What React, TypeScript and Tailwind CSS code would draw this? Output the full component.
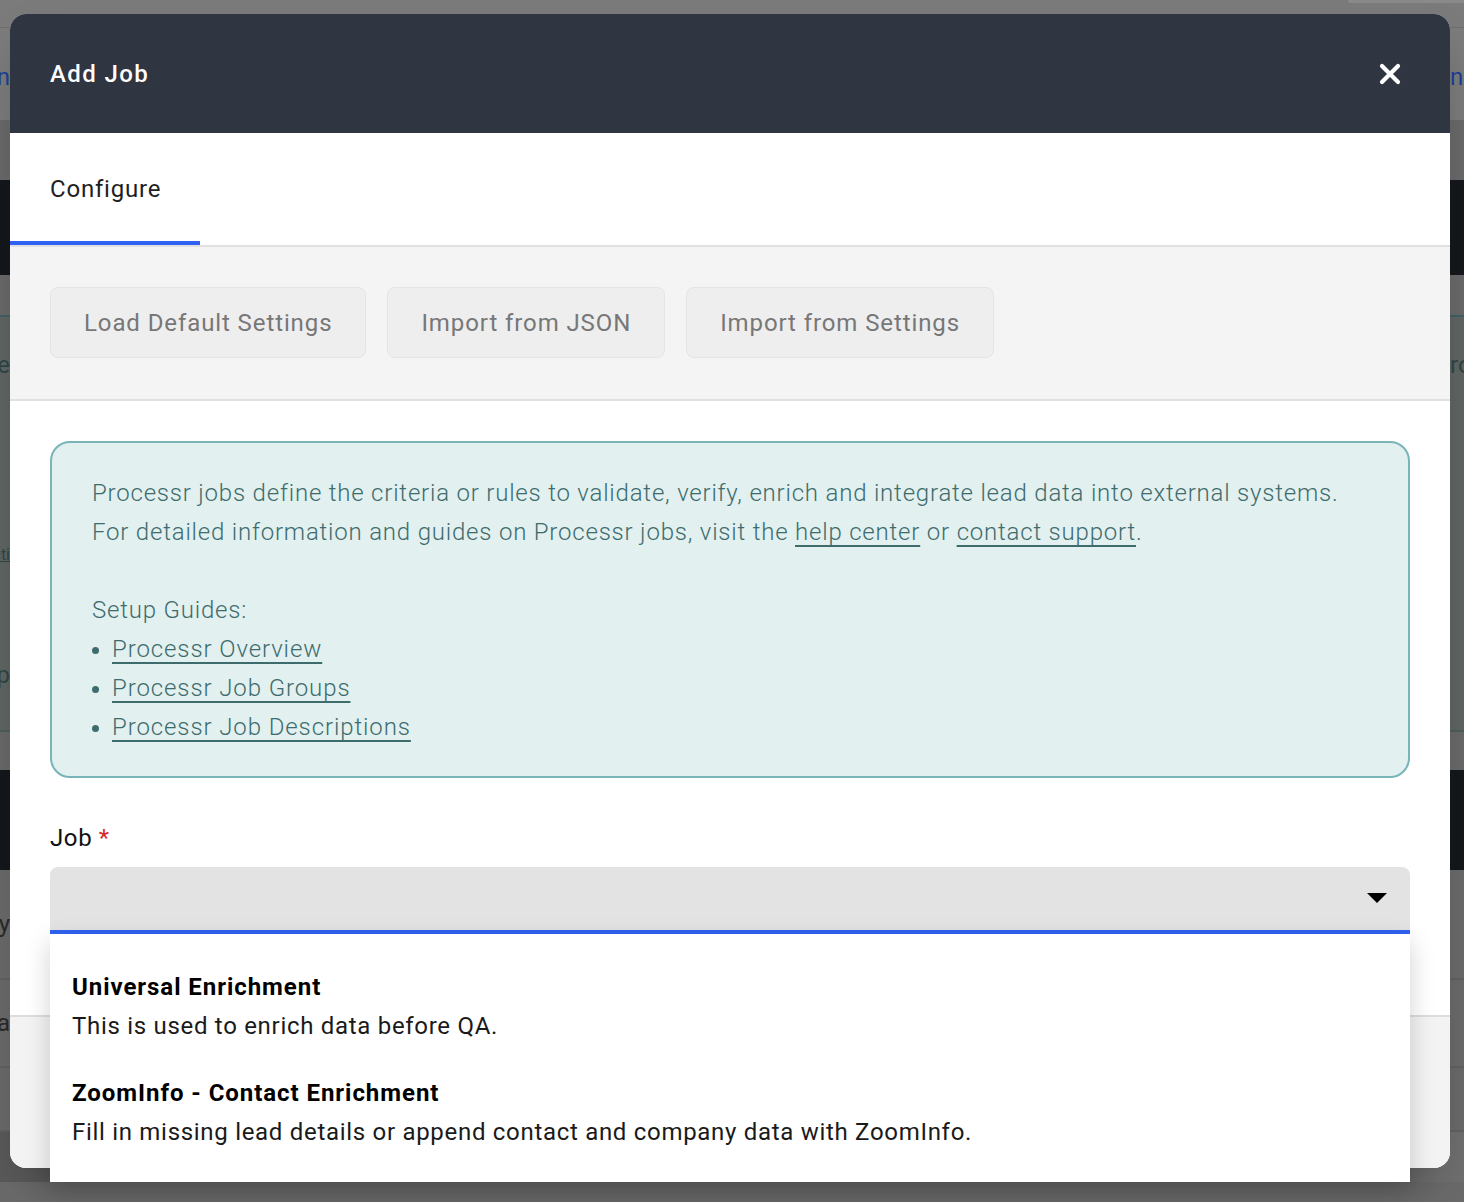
import React from "react";

const jobs = [
  { title: "Universal Enrichment", desc: "This is used to enrich data before QA." },
  {
    title: "ZoomInfo - Contact Enrichment",
    desc: "Fill in missing lead details or append contact and company data with ZoomInfo.",
  },
];

const guides = ["Processr Overview", "Processr Job Groups", "Processr Job Descriptions"];

function EdgeText({ left, right, className = "" }: { left?: string; right?: string; className?: string }) {
  // background page text peeking out on both sides of the modal
  return (
    <div className={`flex justify-between items-center text-[24px] ${className}`}>
      <div className="w-[10px] overflow-hidden flex justify-end">
        <span className="shrink-0 whitespace-nowrap">{left}</span>
      </div>
      <div className="w-[14px] overflow-hidden">
        <span className="whitespace-nowrap">{right}</span>
      </div>
    </div>
  );
}

export default function App() {
  return (
    <div className="relative w-[1464px] h-[1202px] overflow-hidden bg-[#6b6b6b] font-['Roboto','Liberation_Sans',sans-serif]">
      {/* Dimmed page behind the modal */}
      <div className="flex flex-col">
        <div className="h-[28px] bg-[#7b7b7b] border-b border-[#6f6f6f] flex justify-end">
          <div className="w-[116px] h-[3px] bg-[#8a8a8a] rounded-bl-[6px]"></div>
        </div>
        <div className="h-[92px] bg-[#7c7c7c] flex flex-col justify-center pt-[6px]">
          <EdgeText left="Admin" right="nm" className="text-[#2a2a2a] [&_span]:first:text-[#1c3f9a]" />
        </div>
        <div className="h-[60px] bg-[#6a6a6a]"></div>
        <div className="h-[95px] bg-[#14181c]"></div>
        <div className="h-[40px] bg-[#6a6a6a]"></div>
        <div className="h-[415px] bg-[#5f6664] border-t-2 border-[#3f6262] flex flex-col text-[#2f4545]">
          <EdgeText left="Type" right="ro" className="mt-[30px]" />
          <div className="mt-[160px] flex">
            <div className="w-[10px] overflow-hidden flex justify-end">
              <span className="shrink-0 underline">Acti</span>
            </div>
          </div>
          <EdgeText left="Setup" className="mt-[90px]" />
        </div>
        <div className="h-[40px] bg-[#6a6a6a] border-t-2 border-[#4b5e5e]"></div>
        <div className="h-[100px] bg-[#14181c]"></div>
        <div className="flex flex-col text-[#2a2a2a]">
          <div className="h-[110px] border-b-2 border-[#626262] flex items-center">
            <EdgeText left="Priority" className="w-full" />
          </div>
          <div className="h-[88px] border-b-2 border-[#626262] flex items-center">
            <EdgeText left="Data" className="w-full" />
          </div>
          <div className="h-[64px] border-b-2 border-[#626262]"></div>
          <div className="h-[50px] bg-gradient-to-r from-[#5a5a5a] to-[#707070]"></div>
        </div>
      </div>

      {/* Modal */}
      <div className="absolute left-[10px] top-[14px] w-[1440px] flex flex-col bg-white rounded-[16px] shadow-2xl">
        <div className="h-[119px] bg-[#2f3541] rounded-t-[16px] flex items-center justify-between px-[40px]">
          <h1 className="text-[24px] font-medium text-white tracking-[1.4px]">Add Job</h1>
          <button className="w-[24px] h-[24px] flex items-center justify-center mr-[8px]">
            <svg width="22" height="22" viewBox="0 0 22 22">
              <path d="M3 3 L19 19 M19 3 L3 19" stroke="white" strokeWidth="4.2" strokeLinecap="round" />
            </svg>
          </button>
        </div>

        <div className="h-[114px] border-b-2 border-[#e0e0e0] flex">
          <div className="w-[190px] border-b-4 border-[#2f62f2] flex items-center pl-[40px] pt-[4px] text-[24px] tracking-[0.8px] text-[#1f1f1f]">
            Configure
          </div>
        </div>

        <div className="bg-[#f4f4f4] border-b-2 border-[#e0e0e0] pt-[40px] pb-[41px] px-[40px] flex gap-[21px]">
          {["Load Default Settings", "Import from JSON", "Import from Settings"].map((b) => (
            <button
              key={b}
              className="h-[71px] px-[33px] rounded-[8px] bg-[#eeeeee] border border-[#e4e4e4] text-[24px] tracking-[0.9px] text-[#777777]"
            >
              {b}
            </button>
          ))}
        </div>

        <div className="px-[40px] pt-[40px] pb-[81px] relative">
          <div className="rounded-[20px] border-2 border-[#79b5b8] bg-[#e2f0f0] px-[40px] pt-[31px] pb-[29px] text-[24px] font-light leading-[39px] tracking-[0.8px] text-[#3e6c6d]">
            <p>
              Processr jobs define the criteria or rules to validate, verify, enrich and integrate lead data into external systems.
              <br />
              For detailed information and guides on Processr jobs, visit the{" "}
              <a className="underline underline-offset-[5px]">help center</a> or{" "}
              <a className="underline underline-offset-[5px]">contact support</a>.
            </p>
            <p className="mt-[39px]">Setup Guides:</p>
            <ul>
              {guides.map((g) => (
                <li key={g} className="flex items-center">
                  <span className="w-[7px] h-[7px] rounded-full bg-[#3e6c6d] mr-[13px] mt-[2px]"></span>
                  <a className="underline underline-offset-[5px] tracking-[0.9px]">{g}</a>
                </li>
              ))}
            </ul>
          </div>

          <label className="block mt-[44px] pt-[1px] pb-[1px] text-[24px] leading-[30px] tracking-[0.6px] text-[#111111]">
            Job <span className="text-[#d62828]">*</span>
          </label>
          <div className="relative mt-[13px]">
            <div className="h-[67px] bg-[#e3e3e3] rounded-t-[8px] border-b-4 border-[#2f62f2] flex items-center justify-end pr-[23px]">
              <svg width="20" height="11" viewBox="0 0 20 11">
                <path d="M0 0 L20 0 L10 10 Z" fill="#000" />
              </svg>
            </div>
            <ul className="absolute left-0 right-0 top-[67px] z-10 bg-white shadow-[0_8px_24px_rgba(0,0,0,0.18)] pt-[20px] pb-[16px] text-[24px] leading-[39px]">
              {jobs.map((j) => (
                <li key={j.title} className="px-[22px] py-[14px]">
                  <div className="font-bold text-black tracking-[0.95px]">{j.title}</div>
                  <div className="text-[#1a1a1a] tracking-[0.7px]">{j.desc}</div>
                </li>
              ))}
            </ul>
          </div>
        </div>

        <div className="h-[153px] border-t-2 border-[#dddddd] bg-[#f3f3f3] rounded-b-[16px]"></div>
      </div>
    </div>
  );
}
